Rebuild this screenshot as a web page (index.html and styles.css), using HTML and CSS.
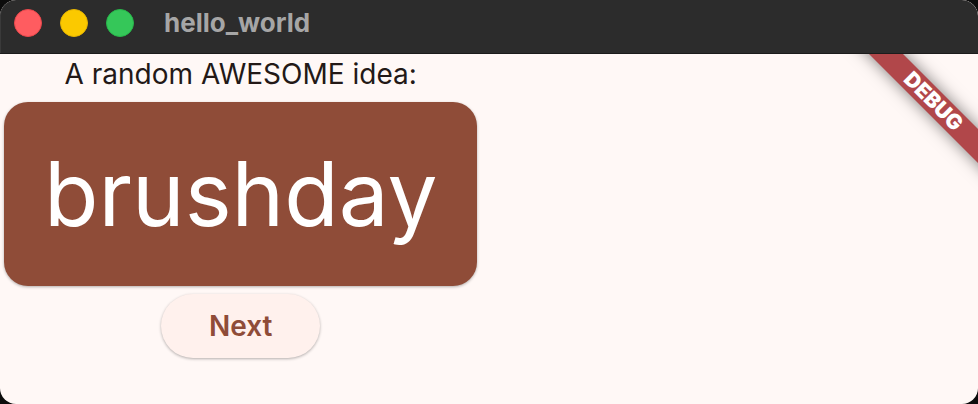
FILE: index.html
```html
<!DOCTYPE html>
<html lang="en">
<head>
<meta charset="utf-8">
<meta name="viewport" content="width=device-width, initial-scale=1">
<title>hello_world</title>
<link rel="stylesheet" href="styles.css">
</head>
<body>
<div class="window">
  <header class="titlebar">
    <div class="controls">
      <button class="control close" aria-label="Close"></button>
      <button class="control minimize" aria-label="Minimize"></button>
      <button class="control maximize" aria-label="Maximize"></button>
    </div>
    <h1 class="title">hello_world</h1>
  </header>
  <main class="content">
    <div class="column">
      <p class="caption">A random AWESOME idea:</p>
      <div class="card">brushday</div>
      <button class="next">Next</button>
    </div>
    <div class="banner">DEBUG</div>
  </main>
</div>
</body>
</html>
```
FILE: styles.css
```css
* {
  box-sizing: border-box;
}

body {
  margin: 0;
  background: #0c0c0c;
  font-family: Inter, "Liberation Sans", sans-serif;
}

.window {
  display: flex;
  flex-direction: column;
  min-height: 100vh;
  overflow: hidden;
  border-radius: 16px;
  background: #fff8f6;
}

.titlebar {
  display: flex;
  align-items: center;
  gap: 30px;
  height: 54px;
  padding: 0 14px 8px;
  border-bottom: 1px solid #1c1c1c;
  border-radius: 16px 16px 0 0;
  background: #2c2c2c;
  box-shadow: inset 1px 0 0 #3a3a3a;
}

.controls {
  display: flex;
  gap: 18px;
}

.control {
  width: 28px;
  height: 28px;
  padding: 0;
  border: 1px solid;
  border-radius: 50%;
}

.close {
  border-color: #e9484c;
  background: #ff5c60;
}

.minimize {
  border-color: #e6b400;
  background: #fbc900;
}

.maximize {
  border-color: #28b74b;
  background: #35c759;
}

.title {
  margin: 0;
  color: #a6a6a6;
  font-size: 26px;
  font-weight: 700;
  line-height: 32px;
}

.content {
  position: relative;
  flex: 1;
  overflow: hidden;
}

.column {
  display: flex;
  flex-direction: column;
  align-items: center;
  width: max-content;
  padding: 0 4px;
}

.caption {
  margin: 0;
  color: #231917;
  font-size: 28px;
  line-height: 40px;
}

.card {
  margin: 8px 0;
  padding: 40px;
  border-radius: 24px;
  background: #8f4c38;
  box-shadow: 0 1px 3px rgba(0, 0, 0, 0.3);
  color: #fff;
  font-size: 89px;
  line-height: 104px;
}

.next {
  padding: 12px 48px;
  border: 0;
  border-radius: 32px;
  background: #fff1ed;
  box-shadow: 0 1px 3px rgba(0, 0, 0, 0.3);
  color: #8f4c38;
  font: 600 28px/40px Inter, "Liberation Sans", sans-serif;
}

.banner {
  position: absolute;
  top: 34px;
  right: -76px;
  width: 244px;
  height: 24px;
  padding-left: 4px;
  transform: rotate(45deg);
  background: #b1474a;
  box-shadow: 0 0 16px rgba(0, 0, 0, 0.5);
  color: #fff;
  font-size: 21px;
  font-weight: 900;
  line-height: 24px;
  text-align: center;
}
```
